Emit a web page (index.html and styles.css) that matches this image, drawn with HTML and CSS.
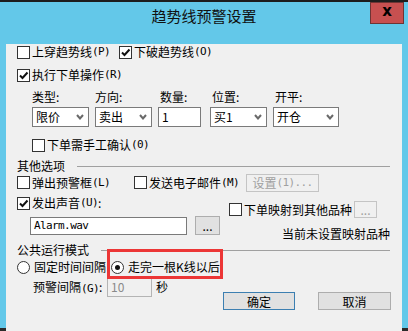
FILE: index.html
```html
<!DOCTYPE html>
<html lang="zh-CN">
<head>
  <meta charset="UTF-8">
  <title>趋势线预警设置</title>
  <link rel="stylesheet" href="styles.css">
</head>
<body>
  <div class="window">
    <!-- Title bar -->
    <div class="titlebar">
      <span class="title">趋势线预警设置</span>
      <span class="close">x</span>
    </div>

    <div class="client">
      <!-- Trend line triggers -->
      <div class="row r-cross">
        <label class="cb w-up"><i class="box"></i>上穿趋势线<span class="m">(P)</span></label>
        <label class="cb"><i class="box on"><svg viewBox="0 0 11 11"><path d="M2 5.5 L4.5 8 L9.5 2.5"/></svg></i>下破趋势线<span class="m">(O)</span></label>
      </div>
      <div class="row r-exec">
        <label class="cb"><i class="box on"><svg viewBox="0 0 11 11"><path d="M2 5.5 L4.5 8 L9.5 2.5"/></svg></i>执行下单操作<span class="m">(R)</span></label>
      </div>

      <!-- Order fields -->
      <div class="fields">
        <div class="field f-type">
          <span class="flabel">类型:</span>
          <div class="select">限价<svg class="chev" viewBox="0 0 8 6"><path d="M1 1 L4 4.5 L7 1"/></svg></div>
        </div>
        <div class="field f-dir">
          <span class="flabel">方向:</span>
          <div class="select">卖出<svg class="chev" viewBox="0 0 8 6"><path d="M1 1 L4 4.5 L7 1"/></svg></div>
        </div>
        <div class="field f-qty">
          <span class="flabel">数量:</span>
          <div class="input">1</div>
        </div>
        <div class="field f-pos">
          <span class="flabel">位置:</span>
          <div class="select">买1<svg class="chev" viewBox="0 0 8 6"><path d="M1 1 L4 4.5 L7 1"/></svg></div>
        </div>
        <div class="field f-open">
          <span class="flabel">开平:</span>
          <div class="select">开仓<svg class="chev" viewBox="0 0 8 6"><path d="M1 1 L4 4.5 L7 1"/></svg></div>
        </div>
      </div>
      <div class="row r-manual">
        <label class="cb"><i class="box"></i>下单需手工确认<span class="m">(0)</span></label>
      </div>

      <!-- Other options -->
      <div class="group g-other">
        <span>其他选项</span>
        <i class="rule"></i>
      </div>
      <div class="row r-popup">
        <label class="cb w-popup"><i class="box"></i>弹出预警框<span class="m">(L)</span></label>
        <label class="cb w-mail"><i class="box"></i>发送电子邮件<span class="m">(M)</span></label>
        <span class="btn disabled b-setup">设置<span class="m">(1)...</span></span>
      </div>

      <div class="sound">
        <div class="sound-left">
          <div class="row r-sound">
            <label class="cb"><i class="box on"><svg viewBox="0 0 11 11"><path d="M2 5.5 L4.5 8 L9.5 2.5"/></svg></i>发出声音<span class="m">(U)</span>:</label>
          </div>
          <div class="row r-file">
            <div class="input i-file"><span class="m">Alarm.wav</span></div>
            <span class="btn b-browse">...</span>
          </div>
        </div>
        <div class="sound-right">
          <div class="row r-map">
            <label class="cb"><i class="box"></i>下单映射到其他品种</label>
            <span class="btn disabled b-map">...</span>
          </div>
          <div class="map-note">当前未设置映射品种</div>
        </div>
      </div>

      <!-- Run mode -->
      <div class="group g-mode">
        <span>公共运行模式</span>
        <i class="rule"></i>
      </div>
      <div class="row r-mode">
        <label class="rb w-fixed"><i class="radio"></i>固定时间间隔</label>
        <label class="rb marked"><i class="radio on"></i>走完一根K线以后</label>
      </div>
      <div class="bottom">
        <div class="interval">
          <span class="ilabel">预警间隔<span class="m">(G)</span>:</span>
          <div class="input disabled i-sec">10</div>
          <span class="unit">秒</span>
        </div>
        <span class="btn default b-ok">确定</span>
        <span class="btn b-cancel">取消</span>
      </div>
    </div>
  </div>
</body>
</html>
```

FILE: styles.css
```css
/* Window frame */
body {
  margin: 0;
  font-family: "Noto Sans CJK SC", "Noto Sans", sans-serif;
  font-size: 12px;
  color: #000;
}

.window {
  width: 408px;
  height: 331px;
  box-sizing: border-box;
  background: #63c8e9;
  border-top: 2px solid #1d1d1d;
  border-bottom: 3px solid #2a2a2a;
  padding: 0 6px;
}

.titlebar {
  position: relative;
  height: 29px;
  text-align: center;
}
.title {
  font-size: 15px;
  line-height: 28px;
  color: #111;
}
.close {
  position: absolute;
  top: 0;
  right: -2px;
  width: 32px;
  height: 20px;
  background: #c75050;
  border: 1px solid #6e3434;
  font: bold 15px/17px "DejaVu Sans", sans-serif;
  text-align: center;
}

.client {
  height: 291px;
  box-sizing: border-box;
  background: #f0f0f0;
  padding-left: 11px;
}

/* Generic rows and controls */
.row {
  display: flex;
  align-items: center;
}
.m {
  font-family: "DejaVu Sans Mono", monospace;
  font-size: 11px;
  letter-spacing: -0.6px;
}

.cb, .rb {
  display: flex;
  align-items: center;
  line-height: 16px;
  white-space: nowrap;
}
.box {
  width: 11px;
  height: 11px;
  border: 1px solid #333;
  background: #fff;
  margin-right: 2px;
  display: flex;
}
.box svg {
  width: 11px;
  height: 11px;
}
.box svg path {
  fill: none;
  stroke: #111;
  stroke-width: 2;
}
.radio {
  width: 11px;
  height: 11px;
  border: 1px solid #333;
  border-radius: 50%;
  background: #fff;
  margin-right: 4px;
  display: flex;
  align-items: center;
  justify-content: center;
}
.radio.on::after {
  content: "";
  width: 5px;
  height: 5px;
  border-radius: 50%;
  background: #111;
}

.select, .input {
  box-sizing: border-box;
  height: 20px;
  border: 1px solid #7a7a7a;
  background: #fff;
  padding-left: 3px;
  line-height: 18px;
  display: flex;
  align-items: center;
  justify-content: space-between;
}
.chev {
  width: 8px;
  height: 6px;
  margin-right: 4px;
}
.chev path {
  fill: none;
  stroke: #6a6a6a;
  stroke-width: 2;
}

.btn {
  box-sizing: border-box;
  display: flex;
  align-items: center;
  justify-content: center;
  border: 1px solid #adadad;
  background: #e1e1e1;
}
.btn.disabled {
  color: #a0a0a0;
  background: #f0f0f0;
  border-color: #c4c4c4;
}
.btn.default {
  border-color: #3c7fb1;
}

/* Section headings with a rule */
.group {
  display: flex;
  align-items: center;
  line-height: 14px;
  padding-right: 12px;
}
.rule {
  flex: 1;
  height: 1px;
  background: #a0a0a0;
  margin-left: 12px;
}

/* Trend line rows */
.r-cross {
  margin-top: 13px;
  height: 16px;
}
.w-up {
  width: 102px;
}
.r-exec {
  margin-top: 7px;
  height: 16px;
}

.fields {
  display: flex;
  margin-top: 6px;
  padding-left: 15px;
}
.field {
  display: flex;
  flex-direction: column;
  margin-right: 6px;
}
.flabel {
  line-height: 16px;
  margin-bottom: 2px;
}
.f-type, .f-dir, .f-pos { width: 57px; }
.f-qty { width: 43px; margin-right: 9px; }
.f-qty .flabel { padding-left: 2px; }
.f-pos .flabel, .f-open .flabel { padding-left: 2px; }
.f-open { width: 66px; }
.input { justify-content: flex-start; }

.r-manual {
  margin-top: 10px;
  height: 16px;
  padding-left: 15px;
}

/* Other options */
.g-other {
  margin-top: 6px;
}
.r-popup {
  height: 19px;
}
.w-popup { width: 117px; }
.w-mail { width: 112px; }
.b-setup {
  width: 73px;
  height: 18px;
}

.sound {
  display: flex;
}
.sound-left {
  width: 212px;
}
.r-sound {
  margin-top: 3px;
  height: 16px;
}
.r-file {
  margin-top: 5px;
  padding-left: 13px;
}
.i-file {
  width: 157px;
  height: 18px;
}
.b-browse {
  width: 25px;
  height: 19px;
  margin-left: 8px;
  line-height: 12px;
}
.sound-right {
  flex: 1;
  padding-right: 12px;
}
.r-map {
  margin-top: 9px;
  height: 17px;
}
.b-map {
  width: 23px;
  height: 17px;
  margin-left: 2px;
}
.map-note {
  margin-top: 8px;
  text-align: right;
  line-height: 16px;
}

/* Run mode */
.g-mode {
  margin-top: 0;
  line-height: 16px;
}
.r-mode {
  margin-top: 2px;
  height: 14px;
}
.w-fixed { width: 94px; }
.marked {
  position: relative;
}
.marked::after {
  content: "";
  position: absolute;
  left: -4px;
  top: -10px;
  width: 110px;
  height: 24px;
  border: 3px solid #ec3636;
}

.bottom {
  display: flex;
  margin-top: 2px;
}
.interval {
  width: 206px;
  height: 21px;
  display: flex;
  align-items: center;
  padding-left: 16px;
  box-sizing: border-box;
}
.ilabel { width: 74px; }
.i-sec {
  width: 45px;
  height: 21px;
  color: #8a8a8a;
  background: #f0f0f0;
  border-color: #b4b4b4;
}
.unit { margin-left: 4px; }
.b-ok, .b-cancel {
  margin-top: 16px;
  height: 18px;
}
.b-ok { width: 72px; margin-left: 0; }
.b-cancel { width: 73px; margin-left: 23px; }
```
